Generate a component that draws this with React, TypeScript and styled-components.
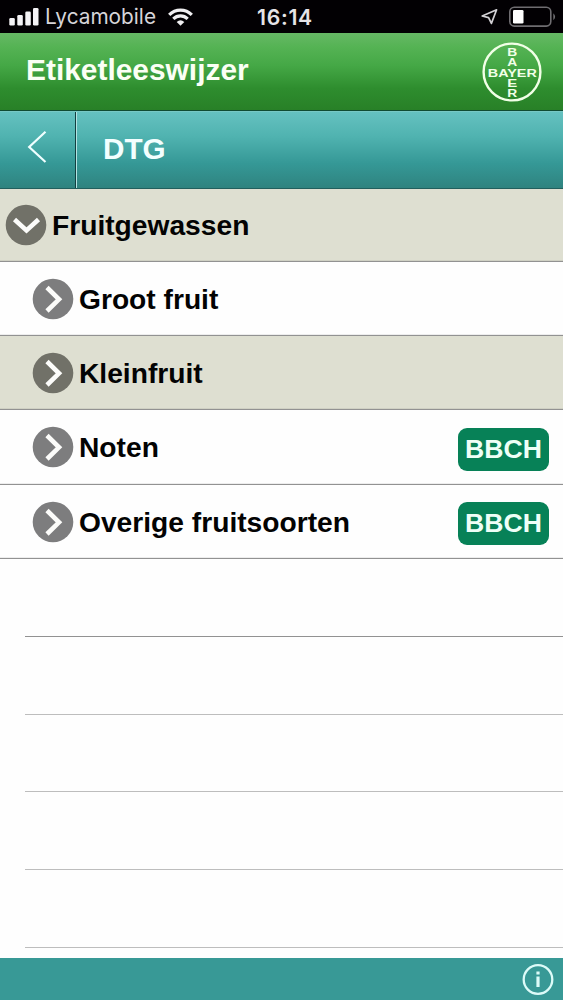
import React from "react";
import styled, { createGlobalStyle } from "styled-components";

const Global = createGlobalStyle`
  * { box-sizing: border-box; }
  body { margin: 0; background: #fff; }
`;

const Screen = styled.div`
  width: 563px;
  height: 1000px;
  display: flex;
  flex-direction: column;
  overflow: hidden;
  background: #fefefe;
  font-family: "Liberation Sans", Arial, sans-serif;
  svg { display: block; flex: none; }
`;

const StatusBar = styled.div`
  height: 33px;
  flex: none;
  display: grid;
  grid-template-columns: 1fr auto 1fr;
  align-items: center;
  padding: 0 9px;
  background: #020003;
  color: #d6d4d8;
  font-family: Inter, sans-serif;
`;

const StatusGroup = styled.div<{ $end?: boolean }>`
  display: flex;
  align-items: center;
  justify-content: ${(p) => (p.$end ? "flex-end" : "flex-start")};
`;

const Carrier = styled.span`
  margin: 1px 12px 0 6px;
  width: 111px;
  font-size: 20.8px;
  line-height: 30px;
  white-space: nowrap;
`;

const Clock = styled.span`
  margin-left: 7px;
  font-size: 21.2px;
  font-weight: 600;
  line-height: 30px;
  letter-spacing: 0.7px;
  color: #e6e4e7;
`;

const BatteryIcon = styled.svg`
  margin: 0 -3px 0 10px;
`;

const TitleBar = styled.header`
  height: 78px;
  flex: none;
  display: flex;
  justify-content: space-between;
  padding: 0 21px 0 26px;
  border-bottom: 1px solid #104b32;
  background: linear-gradient(#66b865 0%, #55b354 18%, #45a846 42%, #2e8d2e 72%, #288027 100%);
`;

const Title = styled.h1`
  margin: 20px 0 0;
  font-size: 29.9px;
  line-height: 34px;
  color: #fbfff5;
`;

const Logo = styled.svg`
  margin-top: 9px;
  font-family: "Liberation Sans", Arial, sans-serif;
  font-weight: 700;
`;

const NavBar = styled.nav`
  height: 78px;
  flex: none;
  display: flex;
  border-top: 1px solid #77c8c5;
  border-bottom: 1px solid #225f5d;
  background: linear-gradient(#65c1c0 0%, #50b3b0 32%, #359896 68%, #2f837f 100%);
`;

const BackButton = styled.button`
  width: 76px;
  display: flex;
  align-items: flex-start;
  padding: 18px 0 0 26px;
  border: 0;
  border-right: 1px solid #123f40;
  background: none;
`;

const NavTitle = styled.h2`
  flex: 1;
  margin: 0;
  padding: 20px 0 0 26px;
  border-left: 1px solid #b4e4e3;
  font-size: 29.7px;
  line-height: 34px;
  color: #f3ffff;
`;

const Row = styled.div<{ $shaded?: boolean; $nested?: boolean; $height: number }>`
  height: ${(p) => p.$height}px;
  flex: none;
  display: flex;
  align-items: center;
  padding: 0 14px 0 ${(p) => (p.$nested ? 32 : 5)}px;
  border-bottom: 1px solid #929292;
  box-shadow: inset 0 -1px #0001;
  background: ${(p) => (p.$shaded ? "#dedfd1" : "#fefefe")};
  color: #030303;
`;

const Label = styled.span`
  flex: 1;
  margin-left: 5px;
  font-size: 28.2px;
  font-weight: 700;
  line-height: 34px;
  white-space: nowrap;
`;

const Badge = styled.span`
  width: 91px;
  height: 43px;
  margin-top: 4px;
  border-radius: 9px;
  background: #078157;
  color: #eefff7;
  font-size: 26.6px;
  font-weight: 700;
  line-height: 43px;
  text-align: center;
`;

const EmptyList = styled.div`
  flex: 1;
  overflow: hidden;
  padding-left: 25px;
`;

const EmptyRow = styled.div<{ $dark?: boolean }>`
  height: 77.8px;
  border-bottom: 1px solid ${(p) => (p.$dark ? "#929292" : "#bdbdbd")};
`;

const Footer = styled.footer`
  height: 42px;
  flex: none;
  display: flex;
  justify-content: flex-end;
  padding: 5px 8px 0 0;
  background: #389996;
`;

const Bullet = ({ open, shaded }: { open?: boolean; shaded?: boolean }) => (
  <svg width="42" height="42" viewBox="0 0 42 42">
    <circle cx="21" cy="21" r="20.3" fill={shaded ? "#717168" : "#7d7d7e"} />
    <path
      d={open ? "M9.5 15.5 L21.5 26.5 L33.5 15.5" : "M15 9.5 L27 21.3 L15 33"}
      fill="none" stroke="#fcfcfa" strokeWidth="4.6"
    />
  </svg>
);

const rows = [
  { label: "Fruitgewassen", height: 73, open: true, shaded: true },
  { label: "Groot fruit", height: 74 },
  { label: "Kleinfruit", height: 74, shaded: true },
  { label: "Noten", height: 75, badge: true },
  { label: "Overige fruitsoorten", height: 74, badge: true },
];

const verticalLetters: [string, number][] = [["B", 14.2], ["A", 24.4], ["E", 44.8], ["R", 55]];

export default function App() {
  return (
    <Screen>
      <Global />
      <StatusBar>
        <StatusGroup>
          <svg width="30" height="18" viewBox="0 0 30 18" fill="#f4f3f6">
            <rect x="0.3" y="10" width="5.5" height="7.5" rx="1.3" />
            <rect x="8.3" y="7" width="5.5" height="10.5" rx="1.3" />
            <rect x="16.3" y="3.5" width="5.5" height="14" rx="1.3" />
            <rect x="24" y="0" width="5.5" height="17.5" rx="1.3" />
          </svg>
          <Carrier>Lycamobile</Carrier>
          <svg width="25" height="18" viewBox="0 0 25 18" fill="none" stroke="#f0eff2" strokeWidth="3.2">
            <path d="M1.2 6.8 C7.5 0.5 17.5 0.5 23.8 6.8" />
            <path d="M5.3 10.8 C9.4 6.8 15.6 6.8 19.7 10.8" />
            <path d="M8.7 14 Q12.5 10.6 16.3 14 L12.5 17.8 Z" fill="#f0eff2" stroke="none" />
          </svg>
        </StatusGroup>
        <Clock>16:14</Clock>
        <StatusGroup $end>
          <svg width="18" height="18" viewBox="0 0 18 18" fill="none" stroke="#d2d0d4" strokeWidth="1.7" strokeLinejoin="round">
            <path d="M1.2 8 L15.6 1.8 L10.4 15.4 L7.6 9.6 Z" />
          </svg>
          <BatteryIcon width="48" height="22" viewBox="0 0 48 22">
            <rect x="0.8" y="1.3" width="41" height="18.8" rx="4.5" fill="none" stroke="#6f6d71" strokeWidth="1.6" />
            <rect x="4" y="4" width="10.5" height="13.5" rx="1.3" fill="#fff" />
            <path d="M44.3 7.3 Q48 10.8 44.3 14.2 Z" fill="#6f6d71" />
          </BatteryIcon>
        </StatusGroup>
      </StatusBar>
      <TitleBar>
        <Title>Etiketleeswijzer</Title>
        <Logo width="60" height="60" viewBox="0 0 60 60" fill="#f1ffe7">
          <circle cx="30" cy="30" r="28.4" fill="none" stroke="#f1ffe7" strokeWidth="2.4" />
          <text x="5.8" y="34.6" textLength="49" lengthAdjust="spacingAndGlyphs" fontSize="11.2">BAYER</text>
          {verticalLetters.map(([letter, y]) => (
            <text key={letter} x="25.2" y={y} textLength="10" lengthAdjust="spacingAndGlyphs" fontSize="11.2">{letter}</text>
          ))}
        </Logo>
      </TitleBar>
      <NavBar>
        <BackButton aria-label="Terug">
          <svg width="22" height="34" viewBox="0 0 22 34" fill="none" stroke="#f0ffff" strokeWidth="2.2">
            <path d="M19.5 1.8 L3.2 17 L19.5 32" />
          </svg>
        </BackButton>
        <NavTitle>DTG</NavTitle>
      </NavBar>
      {rows.map((r) => (
        <Row key={r.label} $height={r.height} $shaded={r.shaded} $nested={!r.open}>
          <Bullet open={r.open} shaded={r.shaded} />
          <Label>{r.label}</Label>
          {r.badge && <Badge>BBCH</Badge>}
        </Row>
      ))}
      <EmptyList>
        <EmptyRow $dark />
        <EmptyRow />
        <EmptyRow />
        <EmptyRow />
        <EmptyRow />
      </EmptyList>
      <Footer>
        <svg width="34" height="34" viewBox="0 0 34 34" fill="none" stroke="#dcfbf8">
          <circle cx="17" cy="16.5" r="14.3" strokeWidth="2.3" />
          <path d="M17 13.5 V24" strokeWidth="3.2" />
          <path d="M17 8.5 V11.5" strokeWidth="3.2" />
        </svg>
      </Footer>
    </Screen>
  );
}
